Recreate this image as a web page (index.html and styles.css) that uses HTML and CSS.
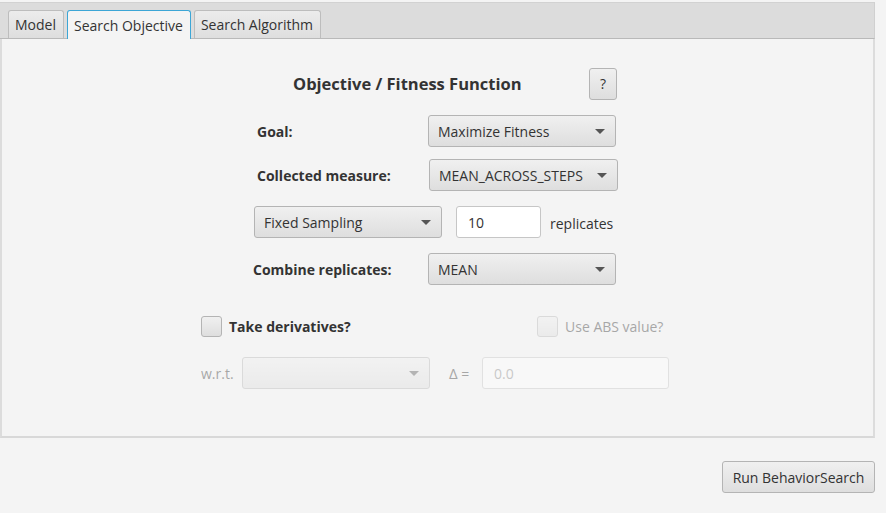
FILE: index.html
```html
<!DOCTYPE html>
<html>
<head>
<meta charset="utf-8">
<link rel="stylesheet" href="styles.css">
</head>
<body>
<div class="tabpane">
  <div class="tabheader">
    <div class="tab">Model</div>
    <div class="tab selected">Search Objective</div>
    <div class="tab">Search Algorithm</div>
  </div>
  <div class="content">
    <div class="row title-row">
      <div class="title">Objective / Fitness Function</div>
      <div class="btn help">?</div>
    </div>
    <div class="row goal-row">
      <div class="label bold goal-label">Goal:</div>
      <div class="combo w188"><span>Maximize Fitness</span><i class="arrow"></i></div>
    </div>
    <div class="row measure-row">
      <div class="label bold measure-label">Collected measure:</div>
      <div class="combo w189"><span>MEAN_ACROSS_STEPS</span><i class="arrow"></i></div>
    </div>
    <div class="row sampling-row">
      <div class="combo w188"><span>Fixed Sampling</span><i class="arrow"></i></div>
      <div class="field w85">10</div>
      <div class="label">replicates</div>
    </div>
    <div class="row combine-row">
      <div class="label bold combine-label">Combine replicates:</div>
      <div class="combo w188"><span>MEAN</span><i class="arrow"></i></div>
    </div>
    <div class="row check-row">
      <div class="check-group deriv">
        <div class="checkbox"></div>
        <div class="label bold">Take derivatives?</div>
      </div>
      <div class="check-group disabled">
        <div class="checkbox"></div>
        <div class="label">Use ABS value?</div>
      </div>
    </div>
    <div class="row wrt-row disabled">
      <div class="label wrt-label">w.r.t.</div>
      <div class="combo w188"><span></span><i class="arrow"></i></div>
      <div class="label delta"><span class="delta-sym">Δ</span> =</div>
      <div class="field w187">0.0</div>
    </div>
  </div>
</div>
<div class="footer">
  <div class="btn run">Run BehaviorSearch</div>
</div>
</body>
</html>
```

FILE: styles.css
```css
html, body {
  margin: 0;
  padding: 0;
  background: #f4f4f4;
  font-family: "Open Sans", "Noto Sans", sans-serif;
  font-size: 14px;
  color: #333;
}
.tabpane {
  width: 875px;
  margin-top: 2px;
}
.tabheader {
  height: 37px;
  box-sizing: border-box;
  background: #dcdcdc;
  border-top: 1px solid #d2d2d2;
  border-bottom: 1px solid #b9b9b9;
  border-right: 1px solid #d0d0d0;
  display: flex;
  align-items: flex-end;
  padding-left: 8px;
  gap: 3px;
}
.tab {
  height: 28px;
  box-sizing: border-box;
  padding: 0 7px 0 6px;
  display: flex;
  align-items: center;
  border: 1px solid #bdbdbd;
  border-bottom: none;
  border-radius: 3px 3px 0 0;
  background: linear-gradient(#ececec, #dedede);
  font-size: 14px;
  color: #333;
}
.tab.selected {
  background: #f4f4f4;
  border-color: #3ca6d6;
  height: 29px;
  margin-bottom: -1px;
}
.content {
  height: 399px;
  box-sizing: border-box;
  border-left: 2px solid #dcdcdc;
  border-right: 2px solid #dcdcdc;
  border-bottom: 2px solid #d8d8d8;
  display: flex;
  flex-direction: column;
}
.row {
  display: flex;
  align-items: center;
}
.bold { font-weight: 700; }
.label { white-space: nowrap; }
.title-row {
  margin-top: 29px;
  padding-left: 291px;
  height: 31px;
}
.title {
  font-weight: 700;
  font-size: 16.5px;
  width: 296px;
}
.btn {
  box-sizing: border-box;
  border: 1px solid #b4b4b4;
  border-radius: 3px;
  background: linear-gradient(#f0f0f0, #dedede);
  display: flex;
  align-items: center;
  justify-content: center;
  color: #333;
}
.help {
  width: 28px;
  height: 32px;
  font-size: 14px;
}
.combo {
  box-sizing: border-box;
  height: 32px;
  border: 1px solid #b4b4b4;
  border-radius: 3px;
  background: linear-gradient(#f0f0f0, #dedede);
  display: flex;
  align-items: center;
  justify-content: space-between;
  padding: 0 10px 0 9px;
}
.w188 { width: 188px; }
.w189 { width: 189px; }
.arrow {
  width: 0;
  height: 0;
  border-left: 5px solid transparent;
  border-right: 5px solid transparent;
  border-top: 5px solid #555;
}
.field {
  box-sizing: border-box;
  height: 32px;
  border: 1px solid #c6c6c6;
  border-radius: 3px;
  background: #fff;
  display: flex;
  align-items: center;
  padding-left: 11px;
}
.w85 { width: 85px; }
.w187 { width: 187px; }
.goal-row { margin-top: 16px; padding-left: 255px; }
.goal-label { width: 171px; }
.measure-row { margin-top: 12px; padding-left: 255px; }
.measure-label { width: 172px; }
.sampling-row { margin-top: 15px; padding-left: 252px; }
.sampling-row .field { margin-left: 14px; }
.sampling-row .label { margin-left: 9px; margin-top: 3px; }
.combine-row { margin-top: 15px; padding-left: 251px; }
.combine-label { width: 175px; }
.check-row { margin-top: 30px; padding-left: 199px; height: 22px; }
.check-group { display: flex; align-items: center; }
.check-group.deriv { width: 336px; }
.checkbox {
  width: 21px;
  height: 21px;
  box-sizing: border-box;
  border: 1px solid #b4b4b4;
  border-radius: 3px;
  background: linear-gradient(#f0f0f0, #dedede);
  margin-right: 7px;
}
.disabled { opacity: 0.4; }
.wrt-row { margin-top: 20px; padding-left: 199px; }
.wrt-label { width: 41px; }
.delta { margin-left: 19px; width: 33px; }
.delta-sym { font-size: 15px; }
.field.w187 { color: #888; }
.footer {
  display: flex;
  justify-content: flex-end;
  padding-right: 11px;
  margin-top: 23px;
}
.run {
  width: 153px;
  height: 32px;
  font-size: 14px;
}
```
